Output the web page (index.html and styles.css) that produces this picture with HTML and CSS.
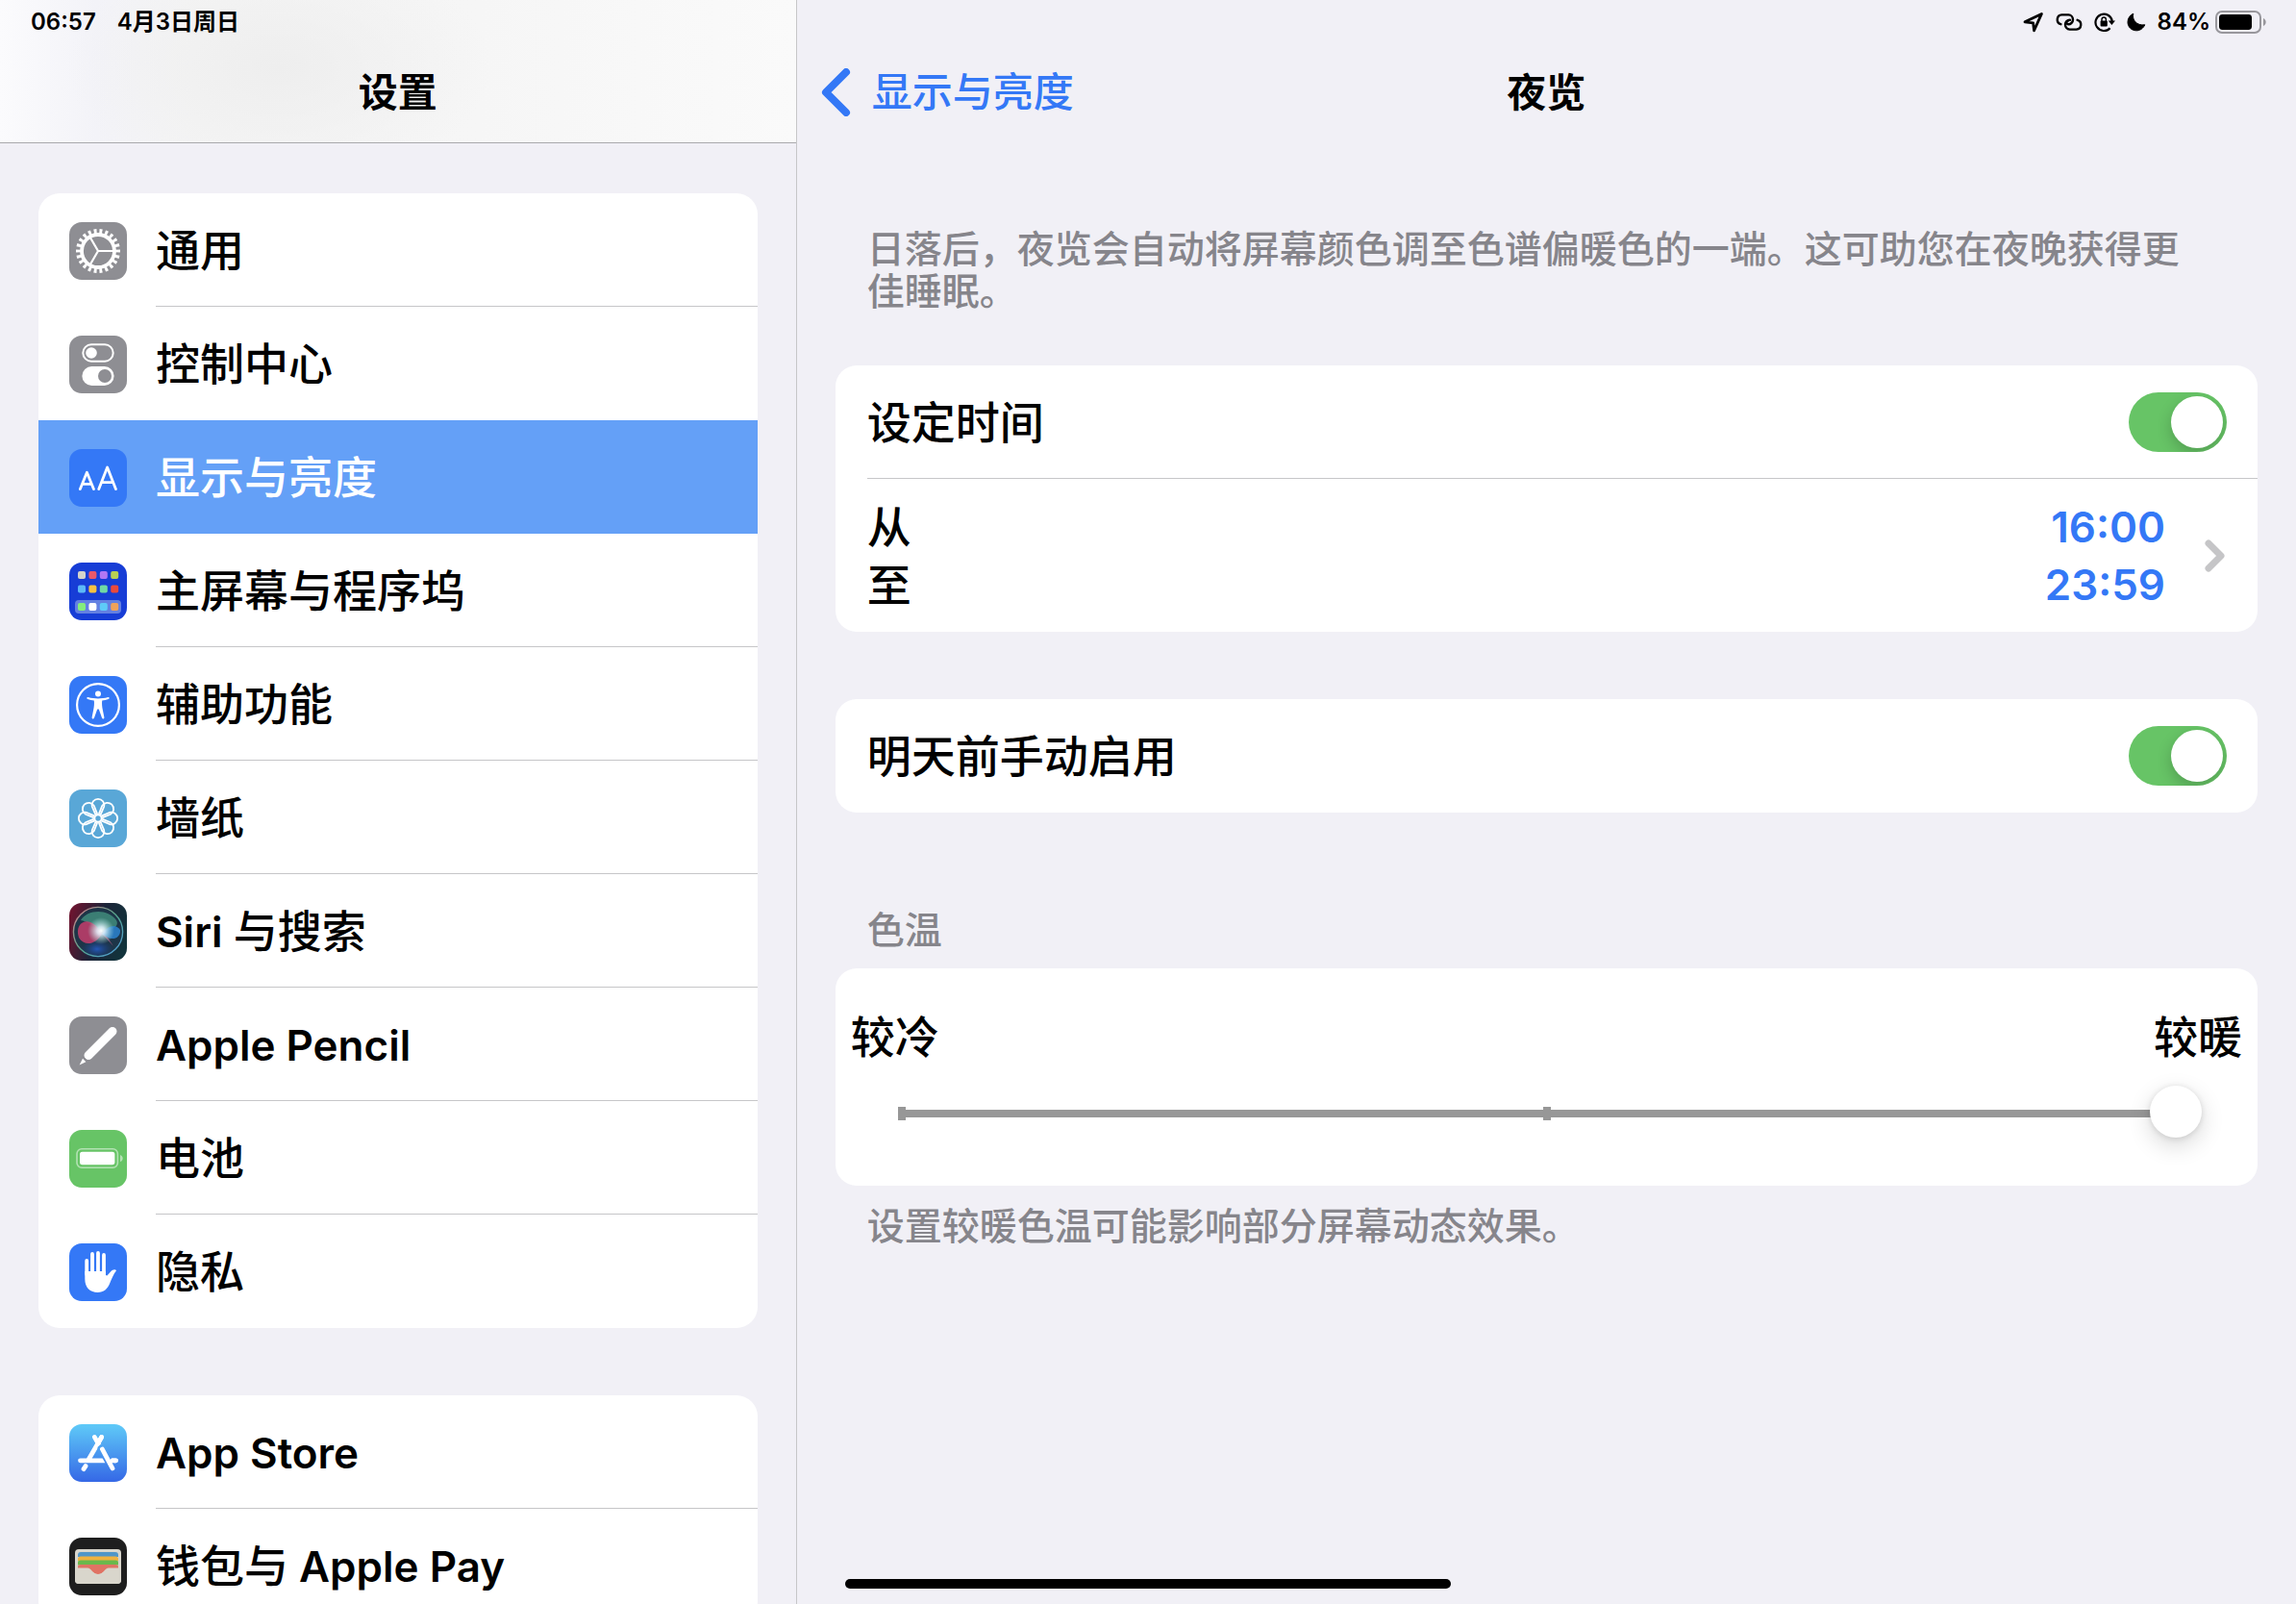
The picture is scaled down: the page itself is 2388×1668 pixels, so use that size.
FILE: index.html
```html
<!DOCTYPE html>
<html lang="zh-CN">
<head>
    <meta charset="UTF-8">
    <meta name="viewport" content="width=device-width, initial-scale=1.0">
    <title>设置 - 夜览</title>
    <link rel="stylesheet" href="styles.css">
</head>
<body>
    <div class="app">
        <aside class="sidebar">
            <header class="sidebar-header">
                <div class="status-bar">
                    <time>06:57</time>
                    <span>4月3日周日</span>
                </div>
                <h1 class="title">设置</h1>
            </header>

            <nav class="menu">
                <ul class="card">
                    <li>
                        <a href="#general" class="menu-row">
                            <svg class="icon" viewBox="0 0 60 60">
                                <rect width="60" height="60" rx="13" fill="#8e8e93"/>
                                <g fill="none" stroke="#fff">
                                    <circle cx="30" cy="30" r="20.3" stroke-width="5.4" pathLength="44" stroke-dasharray="1 1" stroke-dashoffset="0.5"/>
                                    <circle cx="30" cy="30" r="17" stroke-width="3.8"/>
                                    <path d="M30 30H46M30 30L22 16.2M30 30L22 43.8" stroke-width="2.2"/>
                                </g>
                            </svg>
                            <span class="menu-label">通用</span>
                        </a>
                    </li>
                    <li>
                        <a href="#control-center" class="menu-row">
                            <svg class="icon" viewBox="0 0 60 60">
                                <rect width="60" height="60" rx="13" fill="#8e8e93"/>
                                <rect x="14.3" y="9.3" width="31.4" height="17.4" rx="8.7" fill="none" stroke="#fff" stroke-width="2"/>
                                <circle cx="23" cy="18" r="5.8" fill="#fff"/>
                                <rect x="13.4" y="32" width="33.2" height="20" rx="10" fill="#fff"/>
                                <circle cx="37" cy="42" r="7" fill="#8e8e93"/>
                            </svg>
                            <span class="menu-label">控制中心</span>
                        </a>
                    </li>
                    <li>
                        <a href="#display" class="menu-row selected" aria-current="page">
                            <svg class="icon" viewBox="0 0 60 60">
                                <rect width="60" height="60" rx="13" fill="#3478f6"/>
                                <g fill="none" stroke="#fff" stroke-width="2.8" stroke-linecap="round" stroke-linejoin="round">
                                    <path d="M11.4 41.6L18.4 24.2L25.4 41.6M14 36.4H22.8"/>
                                    <path d="M30.8 41.6L39.6 19L48.4 41.6M33.6 34.6H45.6"/>
                                </g>
                            </svg>
                            <span class="menu-label">显示与亮度</span>
                        </a>
                    </li>
                    <li>
                        <a href="#home-screen" class="menu-row">
                            <svg class="icon" viewBox="0 0 60 60">
                                <rect width="60" height="60" rx="13" fill="#173dd6"/>
                                <rect x="6" y="39" width="48" height="14" rx="4" fill="#6380e2"/>
                                <rect x="9" y="9" width="8" height="8" rx="2" fill="#d4d3cb"/>
                                <rect x="20.4" y="9" width="8" height="8" rx="2" fill="#e9596a"/>
                                <rect x="31.8" y="9" width="8" height="8" rx="2" fill="#b177f4"/>
                                <rect x="43.2" y="9" width="8" height="8" rx="2" fill="#b8d154"/>
                                <rect x="9" y="23.5" width="8" height="8" rx="2" fill="#5cb9f8"/>
                                <rect x="20.4" y="23.5" width="8" height="8" rx="2" fill="#f5c242"/>
                                <rect x="31.8" y="23.5" width="8" height="8" rx="2" fill="#70d9a4"/>
                                <rect x="43.2" y="23.5" width="8" height="8" rx="2" fill="#ea4a3b"/>
                                <rect x="9" y="42" width="8" height="8" rx="2" fill="#84ee7d"/>
                                <rect x="20.4" y="42" width="8" height="8" rx="2" fill="#fff"/>
                                <rect x="31.8" y="42" width="8" height="8" rx="2" fill="#5ecbf8"/>
                                <rect x="43.2" y="42" width="8" height="8" rx="2" fill="#f0a35b"/>
                            </svg>
                            <span class="menu-label">主屏幕与程序坞</span>
                        </a>
                    </li>
                    <li>
                        <a href="#accessibility" class="menu-row">
                            <svg class="icon" viewBox="0 0 60 60">
                                <rect width="60" height="60" rx="13" fill="#3478f6"/>
                                <circle cx="30" cy="30" r="21.9" fill="none" stroke="#fff" stroke-width="2.2"/>
                                <circle cx="30" cy="18.4" r="3" fill="#fff"/>
                                <path d="M19.6 22C23 23 27 23.4 30 23.4S37 23 40.4 22C42 21.8 42.2 23.6 40.8 24.1C38.6 24.8 36 25.3 34.2 25.6C33.8 29 34.2 32 34.8 35L36.4 43C36.5 44.8 34.6 45.2 34 43.6L30.8 34.4H29.2L26 43.6C25.4 45.2 23.5 44.8 23.6 43L25.2 35C25.8 32 26.2 29 25.8 25.6C24 25.3 21.4 24.8 19.2 24.1C17.8 23.6 18 21.8 19.6 22Z" fill="#fff"/>
                            </svg>
                            <span class="menu-label">辅助功能</span>
                        </a>
                    </li>
                    <li>
                        <a href="#wallpaper" class="menu-row">
                            <svg class="icon" viewBox="0 0 60 60">
                                <defs>
                                    <path id="petal" d="M27.6 26.6L23.8 17.8A6.4 6.4 0 1 1 36.2 17.8L32.4 26.6"/>
                                </defs>
                                <rect width="60" height="60" rx="13" fill="#59a7d7"/>
                                <g fill="none" stroke="#fff" stroke-width="1.8">
                                    <circle cx="30" cy="30" r="3.6"/>
                                    <use href="#petal"/>
                                    <use href="#petal" transform="rotate(45 30 30)"/>
                                    <use href="#petal" transform="rotate(90 30 30)"/>
                                    <use href="#petal" transform="rotate(135 30 30)"/>
                                    <use href="#petal" transform="rotate(180 30 30)"/>
                                    <use href="#petal" transform="rotate(225 30 30)"/>
                                    <use href="#petal" transform="rotate(270 30 30)"/>
                                    <use href="#petal" transform="rotate(315 30 30)"/>
                                </g>
                            </svg>
                            <span class="menu-label">墙纸</span>
                        </a>
                    </li>
                    <li>
                        <a href="#siri" class="menu-row">
                            <svg class="icon" viewBox="0 0 60 60">
                                <defs>
                                    <linearGradient id="siriBase" x1="0" y1="0.3" x2="1" y2="0.6">
                                        <stop offset="0" stop-color="#6b1530"/>
                                        <stop offset="0.5" stop-color="#1c2438"/>
                                        <stop offset="1" stop-color="#12343c"/>
                                    </linearGradient>
                                    <linearGradient id="siriRing" x1="0" y1="0" x2="1" y2="1">
                                        <stop offset="0" stop-color="#d77f8c"/>
                                        <stop offset="0.5" stop-color="#56a58c"/>
                                        <stop offset="1" stop-color="#4f9be0"/>
                                    </linearGradient>
                                    <radialGradient id="siriGlow">
                                        <stop offset="0" stop-color="#fff"/>
                                        <stop offset="0.3" stop-color="#e6f5ff" stop-opacity="0.85"/>
                                        <stop offset="1" stop-color="#a8e6e0" stop-opacity="0"/>
                                    </radialGradient>
                                    <radialGradient id="siriBlue">
                                        <stop offset="0" stop-color="#2458b8"/>
                                        <stop offset="1" stop-color="#1a3d80" stop-opacity="0"/>
                                    </radialGradient>
                                </defs>
                                <rect width="60" height="60" rx="13" fill="url(#siriBase)"/>
                                <circle cx="30" cy="30" r="25" fill="#1d3548"/>
                                <ellipse cx="29" cy="48" rx="17" ry="10" fill="url(#siriBlue)"/>
                                <path d="M12 18C18 7 40 5 49 18C53 25 42 29 34 30C28 24 18 19 12 18Z" fill="#43917f" opacity="0.8"/>
                                <path d="M34 32C28 43 16 46 10 36C6 24 14 17 22 20C28 22 31 28 34 32Z" fill="#c43d6c" opacity="0.85"/>
                                <path d="M34 32C40 24 48 21 53 28C54 37 43 41 34 32Z" fill="#2b83d0" opacity="0.85"/>
                                <path d="M34 32L46 45L40 36Z" fill="#b55a86" opacity="0.7"/>
                                <circle cx="33" cy="29" r="14" fill="url(#siriGlow)"/>
                                <circle cx="30" cy="30" r="25.6" fill="none" stroke="url(#siriRing)" stroke-width="1.4"/>
                            </svg>
                            <span class="menu-label"><span class="latin">Siri </span>与搜索</span>
                        </a>
                    </li>
                    <li>
                        <a href="#apple-pencil" class="menu-row">
                            <svg class="icon" viewBox="0 0 60 60">
                                <rect width="60" height="60" rx="13" fill="#8e8e93"/>
                                <path d="M45 15.5L20 40.5" stroke="#fff" stroke-width="9" stroke-linecap="round"/>
                                <path d="M14.6 41.4L19 45.8L16 48L12 43Z" fill="#8e8e93"/>
                                <path d="M14 43.8L17.4 47.2L10.6 50.4Z" fill="#fff"/>
                            </svg>
                            <span class="menu-label"><span class="latin">Apple Pencil</span></span>
                        </a>
                    </li>
                    <li>
                        <a href="#battery" class="menu-row">
                            <svg class="icon" viewBox="0 0 60 60">
                                <rect width="60" height="60" rx="13" fill="#67c466"/>
                                <rect x="8" y="19.8" width="42.4" height="19.4" rx="5" fill="none" stroke="#b3e2b3" stroke-width="1.6"/>
                                <rect x="11" y="22.8" width="36.4" height="13.4" rx="2.6" fill="#fff"/>
                                <path d="M53 26C56.6 27.4 56.6 31.8 53 33.2Z" fill="#b3e2b3"/>
                            </svg>
                            <span class="menu-label">电池</span>
                        </a>
                    </li>
                    <li>
                        <a href="#privacy" class="menu-row">
                            <svg class="icon" viewBox="0 0 60 60">
                                <rect width="60" height="60" rx="13" fill="#3478f6"/>
                                <path d="M18.2 18V32M24 11V32M30 10V32M36 12V32" stroke="#fff" stroke-width="3.8" stroke-linecap="round"/>
                                <path d="M16.3 29V37C16.3 46 22 51 29.5 51C36 51 40 47 42 42C44 37 46 32 49 28.2C48 26.6 45 27.2 43 29.4L39.4 33.4L37.9 33V29Z" fill="#fff"/>
                            </svg>
                            <span class="menu-label">隐私</span>
                        </a>
                    </li>
                </ul>

                <ul class="card">
                    <li>
                        <a href="#app-store" class="menu-row">
                            <svg class="icon" viewBox="0 0 60 60">
                                <defs>
                                    <linearGradient id="storeBlue" gradientUnits="userSpaceOnUse" x1="0" y1="0" x2="0" y2="60">
                                        <stop offset="0" stop-color="#5fcaf8"/>
                                        <stop offset="1" stop-color="#3568e6"/>
                                    </linearGradient>
                                </defs>
                                <rect width="60" height="60" rx="13" fill="url(#storeBlue)"/>
                                <g fill="none" stroke="#fff" stroke-width="4.8" stroke-linecap="round">
                                    <path d="M26.3 13.4L31 21.5M33.7 13.4L20 37M11.5 37.8H48.5"/>
                                    <path d="M17 43.6L15 46.6"/>
                                    <path d="M33.6 25L45 46" stroke="url(#storeBlue)" stroke-width="8"/>
                                    <path d="M33.7 13.4L29.4 20.8"/>
                                    <path d="M34.4 26L45 46M45 37.8H48.5"/>
                                </g>
                            </svg>
                            <span class="menu-label"><span class="latin">App Store</span></span>
                        </a>
                    </li>
                    <li>
                        <a href="#wallet" class="menu-row">
                            <svg class="icon" viewBox="0 0 60 60">
                                <rect width="60" height="60" rx="13" fill="#1e1e1e"/>
                                <rect x="6" y="12" width="48" height="36" rx="4" fill="#d9d6cc"/>
                                <path d="M9 20V18Q9 15 12 15H48Q51 15 51 18V20Z" fill="#5096c8"/>
                                <path d="M9 24V22Q9 19.4 12 19.4H48Q51 19.4 51 22V24Z" fill="#f0b23f"/>
                                <path d="M9 28.4V26Q9 23.6 12 23.6H48Q51 23.6 51 26V28.4Z" fill="#6ab84c"/>
                                <path d="M9 32V30.4Q9 28 12 28H48Q51 28 51 30.4V32H41C37 32 36 38 30 38S23 32 19 32Z" fill="#e07364"/>
                                <path d="M6 31.6H19C23 31.6 24 38 30 38S37 31.6 41 31.6H54V44Q54 48 50 48H10Q6 48 6 44Z" fill="#d9d6cc"/>
                            </svg>
                            <span class="menu-label">钱包与<span class="latin"> Apple Pay</span></span>
                        </a>
                    </li>
                </ul>
            </nav>
        </aside>

        <main class="detail">
            <header class="detail-header">
                <div class="status-bar status-right">
                    <svg width="22" height="22" viewBox="0 0 22 22" aria-label="定位">
                        <path d="M2 10.8L19.4 2.4L11.6 19.8L10.6 11.8Z" fill="none" stroke="#000" stroke-width="2.8" stroke-linejoin="round"/>
                    </svg>
                    <svg width="28" height="20" viewBox="0 0 28 20" aria-label="链接">
                        <g fill="none" stroke="#000" stroke-width="2.4" stroke-linecap="round">
                            <path d="M5.4 12.2A5 5 0 0 1 6.4 2.4H13.4A5 5 0 0 1 18 7.4C18 10.4 15.4 12.4 13 12.2C10.8 12 10.6 9.4 12.6 8.8"/>
                            <path d="M22.6 7.8A5 5 0 0 1 21.6 17.6H14.6A5 5 0 0 1 10 12.6C10 9.6 12.6 7.6 15 7.8"/>
                        </g>
                    </svg>
                    <svg width="22" height="22" viewBox="0 0 22 22" aria-label="方向锁定">
                        <path d="M16.6 17.2A8.7 8.7 0 1 1 18.8 10" fill="none" stroke="#000" stroke-width="2.2"/>
                        <path d="M14.8 9.6H22L18.4 14Z"/>
                        <rect x="6.6" y="9.6" width="7.2" height="6" rx="1"/>
                        <path d="M8 10V8.2A2.2 2.2 0 0 1 12.4 8.2V10" fill="none" stroke="#000" stroke-width="1.4"/>
                    </svg>
                    <svg width="20" height="20" viewBox="0 0 20 20" aria-label="专注模式">
                        <path d="M6.8 1.2C5 7.6 10.4 14 18.8 12.8C16.8 17 13.4 19 9.6 18.8C4.6 18.6 1 14.8 1 10C1 6 3.4 2.6 6.8 1.2Z" stroke="#000" stroke-linejoin="round"/>
                    </svg>
                    <span class="battery">
                        84%
                        <svg width="54" height="26" viewBox="0 0 54 26">
                            <rect x="1" y="2" width="46" height="22" rx="6" fill="none" stroke="#98979c" stroke-width="2"/>
                            <rect x="4" y="5" width="34" height="16" rx="3.4"/>
                            <path d="M50 9C53.6 10.4 53.6 15.6 50 17Z" fill="#98979c"/>
                        </svg>
                    </span>
                </div>
                <div class="nav-bar">
                    <a href="#display" class="back">
                        <svg width="32" height="50" viewBox="0 0 32 50">
                            <path d="M27 4L6 25L27 46" fill="none" stroke="currentColor" stroke-width="8" stroke-linecap="round" stroke-linejoin="round"/>
                        </svg>
                        显示与亮度
                    </a>
                    <h2 class="title">夜览</h2>
                </div>
            </header>

            <div class="content">
                <p class="note intro">日落后，夜览会自动将屏幕颜色调至色谱偏暖色的一端。这可助您在夜晚获得更佳睡眠。</p>

                <section class="card">
                    <div class="row">
                        <label for="scheduled">设定时间</label>
                        <input type="checkbox" role="switch" class="switch" id="scheduled" checked>
                    </div>
                    <a href="#schedule" class="row time-row">
                        <span class="time-names">
                            <span>从</span>
                            <span>至</span>
                        </span>
                        <span class="time-values">
                            <time class="latin">16:00</time>
                            <time class="latin">23:59</time>
                        </span>
                        <svg width="22" height="36" viewBox="0 0 22 36">
                            <path d="M4 5L17 18L4 31" fill="none" stroke="#c5c5c7" stroke-width="7" stroke-linecap="round" stroke-linejoin="round"/>
                        </svg>
                    </a>
                </section>

                <section class="card">
                    <div class="row">
                        <label for="manual">明天前手动启用</label>
                        <input type="checkbox" role="switch" class="switch" id="manual" checked>
                    </div>
                </section>

                <label class="note group-title" for="temperature">色温</label>
                <section class="card slider-card">
                    <div class="slider-labels">
                        <span>较冷</span>
                        <span>较暖</span>
                    </div>
                    <input type="range" class="slider" id="temperature" min="0" max="100" value="100">
                </section>
                <p class="note footnote">设置较暖色温可能影响部分屏幕动态效果。</p>
            </div>
        </main>

        <div class="home-indicator"></div>
    </div>
</body>
</html>
```
FILE: styles.css
```css
* {
    box-sizing: border-box;
}

body {
    margin: 0;
    font-family: Inter, "Noto Sans CJK SC", sans-serif;
    font-size: 46px;
    font-weight: 500;
    line-height: 60px;
    color: #000;
    background: #f1f0f6;
}

h1, h2, p, ul {
    margin: 0;
    padding: 0;
}

ul {
    list-style: none;
}

a {
    color: inherit;
    text-decoration: none;
}

svg {
    display: block;
    flex-shrink: 0;
}

.latin {
    font-size: 44px;
    font-weight: 600;
}

.app {
    position: relative;
    display: grid;
    grid-template-columns: 34.7% 1fr;
    height: 100vh;
    overflow: hidden;
}

/* Status bar and titles */
.status-bar {
    display: flex;
    align-items: center;
    gap: 22px;
    height: 46px;
    padding: 0 32px;
    font-size: 24px;
    font-weight: 600;
    line-height: 30px;
}

.status-right {
    justify-content: flex-end;
    gap: 12px;
    padding-right: 30px;
}

.battery {
    display: flex;
    align-items: center;
    gap: 5px;
}

.title {
    font-size: 41px;
    font-weight: 600;
    line-height: 100px;
    text-align: center;
}

/* Sidebar */
.sidebar {
    border-right: 1px solid #c6c6c8;
    overflow: hidden;
}

.sidebar-header {
    height: 149px;
    border-bottom: 1px solid #a9a9ac;
    background:
        radial-gradient(ellipse 220px 130px at 290px 70px, #eeeeee, rgba(238, 238, 238, 0)),
        linear-gradient(to right, #fbfbfd, #f3f3f8 100px, #f5f5f5 200px, #f6f6f6 500px, #fafafa);
}

.menu {
    display: flex;
    flex-direction: column;
    gap: 70px;
    padding: 52px 40px 0;
}

.card {
    border-radius: 22px;
    background: #fff;
    overflow: hidden;
}

.menu-row {
    display: flex;
    align-items: center;
    gap: 30px;
    height: 118px;
    padding-left: 32px;
}

.icon {
    width: 60px;
    height: 60px;
    margin-top: 2px;
}

.menu-label {
    flex: 1;
    height: 118px;
    line-height: 118px;
    border-bottom: 1px solid #c6c6c8;
}

.menu-row.selected {
    background: #64a0f7;
    color: #fff;
}

li:last-child .menu-label,
li:has(+ li .selected) .menu-label,
.selected .menu-label {
    border-bottom-color: transparent;
}

/* Detail pane */
.nav-bar {
    display: grid;
    grid-template-columns: 1fr auto 1fr;
    align-items: center;
    padding: 0 24px;
}

.back {
    display: flex;
    align-items: center;
    gap: 22px;
    font-size: 42px;
    color: #3478f6;
}

.content {
    padding: 91px 40px 0;
}

.note {
    display: block;
    padding: 0 50px 0 33px;
    font-size: 39px;
    line-height: 44px;
    color: #86858b;
}

.intro {
    margin-bottom: 55px;
}

.content .card + .card {
    margin-top: 70px;
}

.row {
    display: flex;
    align-items: center;
    justify-content: space-between;
    height: 118px;
    margin-left: 33px;
    padding-right: 32px;
}

.row:not(:last-child) {
    border-bottom: 1px solid #c6c6c8;
}

.row.time-row {
    height: 159px;
    padding-right: 33px;
}

.time-names,
.time-values {
    display: flex;
    flex-direction: column;
}

.time-values {
    margin-left: auto;
    margin-right: 41px;
    text-align: right;
    color: #3478f6;
}

.switch {
    appearance: none;
    width: 102px;
    height: 62px;
    margin: 0;
    padding: 4px;
    border-radius: 31px;
    background: #e9e9eb;
    overflow: hidden;
}

.switch::before {
    content: "";
    display: block;
    width: 54px;
    height: 54px;
    border-radius: 50%;
    background: #fff;
    box-shadow: 0 6px 16px rgba(0, 0, 0, 0.2);
}

.switch:checked {
    background: #67c466;
}

.switch:checked::before {
    margin-left: auto;
}

.group-title {
    margin: 100px 0 18px;
}

.footnote {
    margin-top: 20px;
}

.slider-card {
    padding: 46px 16px 50px;
}

.slider-labels {
    display: flex;
    justify-content: space-between;
    line-height: 50px;
}

/* line plus the start and middle ticks */
.slider {
    appearance: none;
    display: block;
    width: calc(100% - 91px);
    height: 54px;
    margin: 26px 42px 0 49px;
    background:
        linear-gradient(#979797, #979797) 0 25px / calc(100% - 27px) 8px no-repeat,
        linear-gradient(#979797, #979797) 0 22px / 8px 14px no-repeat,
        linear-gradient(#979797, #979797) calc(50% - 3px) 22px / 8px 14px no-repeat;
}

.slider::-webkit-slider-thumb {
    appearance: none;
    width: 54px;
    height: 54px;
    border-radius: 50%;
    background: #fff;
    box-shadow: 0 8px 24px rgba(0, 0, 0, 0.16), 0 1px 6px rgba(0, 0, 0, 0.12);
}

.home-indicator {
    position: absolute;
    left: 50%;
    bottom: 16px;
    width: 630px;
    height: 10px;
    border-radius: 5px;
    background: #000;
    transform: translateX(-50%);
}
```
